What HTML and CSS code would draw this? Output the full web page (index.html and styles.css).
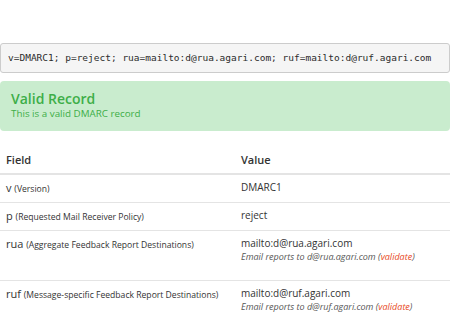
FILE: index.html
```html
<!DOCTYPE html>
<html>
<head>
<meta charset="utf-8">
<link rel="stylesheet" href="styles.css">
</head>
<body>
<div class="page">
  <pre class="record">v=DMARC1; p=reject; rua=mailto:d@rua.agari.com; ruf=mailto:d@ruf.agari.com</pre>
  <div class="alert">
    <div class="alert-title">Valid Record</div>
    <div class="alert-text">This is a valid DMARC record</div>
  </div>
  <table class="tags">
    <thead>
      <tr><th class="col-field">Field</th><th>Value</th></tr>
    </thead>
    <tbody>
      <tr><td>v <small>(Version)</small></td><td class="val">DMARC1</td></tr>
      <tr><td>p <small>(Requested Mail Receiver Policy)</small></td><td class="val">reject</td></tr>
      <tr class="tall"><td>rua <small>(Aggregate Feedback Report Destinations)</small></td><td class="val">mailto:d@rua.agari.com<div class="note">Email reports to d@rua.agari.com (<span class="validate">validate</span>)</div></td></tr>
      <tr class="tall"><td>ruf <small>(Message-specific Feedback Report Destinations)</small></td><td class="val">mailto:d@ruf.agari.com<div class="note">Email reports to d@ruf.agari.com (<span class="validate">validate</span>)</div></td></tr>
    </tbody>
  </table>
</div>
</body>
</html>
```
FILE: styles.css
```css
html, body {
  margin: 0;
  padding: 0;
  background: #fff;
}
.page {
  font-family: "Open Sans", "Noto Sans", sans-serif;
  color: #333;
  padding-top: 43px;
}
.record {
  margin: 0;
  height: 30px;
  box-sizing: border-box;
  padding: 0 7px;
  line-height: 28px;
  font-family: "DejaVu Sans Mono", monospace;
  font-size: 9.5px;
  color: #2b2b2b;
  background: #f5f5f5;
  border: 1px solid #ccc;
  border-radius: 3px;
  white-space: pre;
  overflow: hidden;
}
.alert {
  margin-top: 8px;
  height: 50px;
  box-sizing: border-box;
  padding: 8px 11px;
  background: #c9ecce;
  border-radius: 4px;
  color: #3dae48;
}
.alert-title {
  font-size: 14px;
  font-weight: 600;
  line-height: 19px;
}
.alert-text {
  font-size: 9.8px;
  line-height: 12px;
}
.tags {
  width: 100%;
  border-collapse: collapse;
  margin-top: 17px;
  font-size: 11px;
}
.tags th {
  text-align: left;
  font-weight: 600;
  font-size: 11px;
  padding: 6px 6px 7px;
  border-bottom: 2px solid #e4e4e4;
  line-height: 12px;
}
.col-field {
  width: 223px;
}
.tags td {
  padding: 6px 6px 8px;
  border-top: 1px solid #e4e4e4;
  vertical-align: top;
  line-height: 13px;
}
.tags td.val {
  font-size: 10px;
}
.tags thead + tbody tr:first-child td {
  border-top: none;
}
.tags small {
  font-size: 8.6px;
  line-height: 1;
}
.tags tr.tall td {
  height: 35px;
}
.note {
  font-size: 9px;
  font-style: italic;
  color: #555;
  margin-top: 1px;
  line-height: 12px;
}
.validate {
  color: #e8491d;
}
```
